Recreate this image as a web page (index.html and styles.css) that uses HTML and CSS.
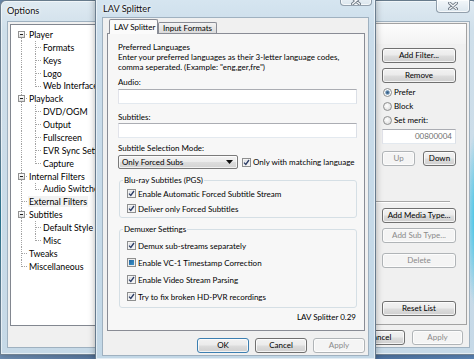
FILE: index.html
```html
<!DOCTYPE html>
<html lang="en">
<head>
    <meta charset="UTF-8">
    <meta name="viewport" content="width=device-width, initial-scale=1.0">
    <title>LAV Splitter</title>
    <link rel="stylesheet" href="styles.css">
</head>
<body>
    <div class="desktop">

        <!-- MPC options window (inactive, behind) -->
        <div class="window options-window">
            <div class="titlebar">
                <span class="title">Options</span>
                <span class="close-btn options-close">
                    <svg width="10" height="8" viewBox="0 0 10 8"><path d="M1.5 1 L8.5 7 M8.5 1 L1.5 7" stroke="#6f7a86" stroke-width="3" stroke-linecap="round"/><path d="M1.5 1 L8.5 7 M8.5 1 L1.5 7" stroke="#f6f8fa" stroke-width="1.3" stroke-linecap="round"/></svg>
                </span>
            </div>
            <div class="client options-client">
                <div class="options-main">
                    <div class="tree">
                        <div class="node top first"><span class="expander"></span>Player</div>
                        <div class="node child">Formats</div>
                        <div class="node child">Keys</div>
                        <div class="node child">Logo</div>
                        <div class="node child last-child">Web Interface</div>
                        <div class="node top"><span class="expander"></span>Playback</div>
                        <div class="node child">DVD/OGM</div>
                        <div class="node child">Output</div>
                        <div class="node child">Fullscreen</div>
                        <div class="node child">EVR Sync Settings</div>
                        <div class="node child last-child">Capture</div>
                        <div class="node top"><span class="expander"></span>Internal Filters</div>
                        <div class="node child last-child">Audio Switcher</div>
                        <div class="node top leaf"><span class="selected">External Filters</span></div>
                        <div class="node top"><span class="expander"></span>Subtitles</div>
                        <div class="node child">Default Style</div>
                        <div class="node child last-child">Misc</div>
                        <div class="node top leaf">Tweaks</div>
                        <div class="node top leaf last">Miscellaneous</div>
                    </div>
                    <div class="page">
                        <div class="page-caption"></div>
                        <div class="page-section upper">
                            <div class="page-list"></div>
                            <div class="side">
                                <button class="btn side-btn">Add Filter...</button>
                                <button class="btn side-btn gap">Remove</button>
                                <div class="radios">
                                    <div class="radio-row"><span class="radio checked"></span>Prefer</div>
                                    <div class="radio-row"><span class="radio"></span>Block</div>
                                    <div class="radio-row"><span class="radio"></span>Set merit:</div>
                                </div>
                                <div class="field merit">00800004</div>
                                <div class="updown">
                                    <button class="btn small" disabled>Up</button>
                                    <button class="btn small">Down</button>
                                </div>
                            </div>
                        </div>
                        <div class="page-rule"></div>
                        <div class="page-section lower">
                            <div class="page-list"></div>
                            <div class="side">
                                <button class="btn side-btn">Add Media Type...</button>
                                <button class="btn side-btn gap" disabled>Add Sub Type...</button>
                                <button class="btn side-btn gap-wide" disabled>Delete</button>
                                <button class="btn side-btn bottom">Reset List</button>
                            </div>
                        </div>
                    </div>
                </div>
                <div class="dialog-buttons options-buttons">
                    <button class="btn wide">OK</button>
                    <button class="btn wide">Cancel</button>
                    <button class="btn wide" disabled>Apply</button>
                </div>
            </div>
        </div>

        <!-- LAV Splitter property dialog (active, on top) -->
        <div class="window lav-window">
            <div class="titlebar">
                <span class="title">LAV Splitter</span>
                <span class="close-btn lav-close">
                    <svg width="10" height="8" viewBox="0 0 10 8"><path d="M1.5 1 L8.5 7 M8.5 1 L1.5 7" stroke="#6f7a86" stroke-width="3" stroke-linecap="round"/><path d="M1.5 1 L8.5 7 M8.5 1 L1.5 7" stroke="#f6f8fa" stroke-width="1.3" stroke-linecap="round"/></svg>
                </span>
            </div>
            <div class="client lav-client">
                <div class="tabs">
                    <div class="tab active">LAV Splitter</div>
                    <div class="tab">Input Formats</div>
                </div>
                <div class="tab-panel">
                    <p class="pref">Preferred Languages<br>Enter your preferred languages as their 3-letter language codes,<br>comma seperated. (Example: "eng,ger,fre")</p>
                    <div class="lbl">Audio:</div>
                    <div class="field text"></div>
                    <div class="lbl subs">Subtitles:</div>
                    <div class="field text tight"></div>
                    <div class="lbl">Subtitle Selection Mode:</div>
                    <div class="mode-row">
                        <div class="combo">
                            <span>Only Forced Subs</span>
                            <svg width="7" height="4" viewBox="0 0 7 4"><path d="M0 0 H7 L3.5 4 Z" fill="#111"/></svg>
                        </div>
                        <div class="check inline"><span class="box on"><svg width="7" height="7" viewBox="0 0 7 7"><path d="M1 3.6 L2.8 5.5 L6 1" fill="none" stroke="#2c3d66" stroke-width="1.3"/></svg></span>Only with matching language</div>
                    </div>
                    <fieldset class="group pgs">
                        <legend>Blu-ray Subtitles (PGS)</legend>
                        <div class="check"><span class="box on"><svg width="7" height="7" viewBox="0 0 7 7"><path d="M1 3.6 L2.8 5.5 L6 1" fill="none" stroke="#2c3d66" stroke-width="1.3"/></svg></span>Enable Automatic Forced Subtitle Stream</div>
                        <div class="check"><span class="box on"><svg width="7" height="7" viewBox="0 0 7 7"><path d="M1 3.6 L2.8 5.5 L6 1" fill="none" stroke="#2c3d66" stroke-width="1.3"/></svg></span>Deliver only Forced Subtitles</div>
                    </fieldset>
                    <fieldset class="group demux">
                        <legend>Demuxer Settings</legend>
                        <div class="check"><span class="box on"><svg width="7" height="7" viewBox="0 0 7 7"><path d="M1 3.6 L2.8 5.5 L6 1" fill="none" stroke="#2c3d66" stroke-width="1.3"/></svg></span>Demux sub-streams separately</div>
                        <div class="check"><span class="box mixed"></span>Enable VC-1 Timestamp Correction</div>
                        <div class="check"><span class="box on"><svg width="7" height="7" viewBox="0 0 7 7"><path d="M1 3.6 L2.8 5.5 L6 1" fill="none" stroke="#2c3d66" stroke-width="1.3"/></svg></span>Enable Video Stream Parsing</div>
                        <div class="check"><span class="box on"><svg width="7" height="7" viewBox="0 0 7 7"><path d="M1 3.6 L2.8 5.5 L6 1" fill="none" stroke="#2c3d66" stroke-width="1.3"/></svg></span>Try to fix broken HD-PVR recordings</div>
                    </fieldset>
                    <div class="version">LAV Splitter 0.29</div>
                </div>
                <div class="dialog-buttons lav-buttons">
                    <button class="btn wide default">OK</button>
                    <button class="btn wide">Cancel</button>
                    <button class="btn wide" disabled>Apply</button>
                </div>
            </div>
        </div>

    </div>
</body>
</html>
```

FILE: styles.css
```css
* {
    margin: 0;
    padding: 0;
    box-sizing: border-box;
}

body {
    width: 474px;
    height: 359px;
    overflow: hidden;
    font-family: Lato, 'Liberation Sans', sans-serif;
    font-size: 8px;
    color: #000;
}

.desktop {
    position: relative;
    width: 474px;
    height: 359px;
    overflow: hidden;
    background: linear-gradient(90deg, #6f8fb4, #3e5f8c 45%, #5b86b8);
}

/* Aero glass windows */
.window {
    position: absolute;
    display: flex;
    flex-direction: column;
    border: 1px solid rgba(40, 60, 80, 0.6);
    border-radius: 6px 6px 0 0;
    box-shadow: inset 0 0 0 1px rgba(255, 255, 255, 0.55), 0 0 7px rgba(0, 0, 0, 0.3);
}

.options-window {
    left: 0;
    top: 0;
    width: 478px;
    height: 355px;
    padding: 0 7px 6px 6px;
    background:
        radial-gradient(ellipse 12px 90px at 100% 62%, rgba(30, 190, 230, 0.95), rgba(30, 190, 230, 0)),
        linear-gradient(#dfeaf2, #cfdfea 30px, #c6d9e7);
}

.lav-window {
    left: 95px;
    top: -8px;
    width: 281px;
    height: 368px;
    padding: 0 6px 3px 6px;
    background: linear-gradient(#d8e7f1, #cadcea 40px, #c2d7e6);
}

.titlebar {
    display: flex;
    flex: none;
}

.options-window .titlebar {
    height: 20px;
}

.lav-window .titlebar {
    height: 24px;
    padding-left: 1px;
}

.title {
    font-size: 9.2px;
    color: #111;
    text-shadow: 0 0 5px #fff, 0 0 3px #fff;
}

.options-window .title {
    line-height: 20px;
}

.lav-window .title {
    margin-top: 11px;
    line-height: 10px;
}

.close-btn {
    margin-left: auto;
    display: flex;
    align-items: center;
    justify-content: center;
    border: 1px solid rgba(70, 90, 110, 0.55);
    border-top: none;
    border-radius: 0 0 4px 4px;
    background: linear-gradient(#f3f7fa, #dbe6ee);
    box-shadow: inset 0 0 0 1px rgba(255, 255, 255, 0.7);
}

.options-close {
    width: 34px;
    height: 13px;
    margin-top: -1px;
}

.lav-close {
    width: 32px;
    height: 13px;
    margin-right: -3px;
    padding-top: 4px;
}

.client {
    flex: 1;
    background: #f0f0f0;
    border: 1px solid #9fb1c0;
    display: flex;
    flex-direction: column;
}

/* ---- Options window ---- */
.options-client {
    padding: 1px 2px 0 2px;
}

.options-main {
    display: flex;
    gap: 5px;
    height: 304px;
    align-items: flex-start;
}

.tree {
    width: 175px;
    height: 302px;
    margin-top: 1px;
    background: #fff;
    border: 1px solid #828790;
    padding-top: 3px;
    font-size: 8.8px;
    --dot-v: repeating-linear-gradient(to bottom, #a3a3a3 0 1px, transparent 1px 2px);
    --dot-h: repeating-linear-gradient(to right, #a3a3a3 0 1px, transparent 1px 2px);
}

.node {
    display: flex;
    align-items: center;
    height: 12.88px;
    white-space: nowrap;
}

.node.top {
    background:
        var(--dot-h) 11px 6px / 6px 1px no-repeat,
        var(--dot-v) 10px 0 / 1px 100% no-repeat;
}

.node.top.first {
    background-position: 11px 6px, 10px 6px;
}

.node.top.last {
    background-size: 6px 1px, 1px 7px;
}

.node.leaf {
    padding-left: 18px;
}

.node.child {
    padding-left: 32px;
    background:
        var(--dot-h) 25px 6px / 6px 1px no-repeat,
        var(--dot-v) 24px 0 / 1px 100% no-repeat,
        var(--dot-v) 10px 0 / 1px 100% no-repeat;
}

.node.child.last-child {
    background-size: 6px 1px, 1px 7px, 1px 100%;
}

.expander {
    width: 7px;
    height: 7px;
    margin: 0 4px 0 7px;
    border: 1px solid #919191;
    background:
        linear-gradient(#1e1e1e, #1e1e1e) center / 3px 1px no-repeat,
        linear-gradient(#ffffff, #dedede);
}

.selected {
    background: #f2f2f2;
    padding: 0 1px;
    margin-left: -1px;
}

.page {
    flex: 1;
    height: 302px;
    border: 1px solid #a2a2a2;
    box-shadow: inset 1px 1px 0 #fff;
    display: flex;
    flex-direction: column;
}

.page-caption {
    height: 20px;
    flex: none;
    background: linear-gradient(#fdfdfd, #f3f3f3);
}

.page-section {
    display: flex;
}

.page-section.upper {
    height: 157px;
    padding-top: 4px;
    flex: none;
}

.page-section.lower {
    flex: 1;
    padding: 5px 0 8px;
}

.page-list {
    flex: 1;
}

.side {
    width: 74px;
    margin-right: 10px;
    display: flex;
    flex-direction: column;
}

.page-rule {
    height: 2px;
    margin-right: 16px;
    border-top: 1px solid #a8a8a8;
    border-bottom: 1px solid #fff;
    flex: none;
}

.btn {
    font-family: inherit;
    font-size: 8px;
    color: #000;
    height: 15px;
    border: 1px solid #707070;
    border-radius: 3px;
    background: linear-gradient(#f2f2f2 0%, #ebebeb 48%, #dddddd 52%, #cfcfcf 100%);
    box-shadow: inset 0 0 0 1px rgba(255, 255, 255, 0.75);
    line-height: 13px;
    padding: 0;
}

.btn:disabled {
    color: #8a8a8a;
    border-color: #b0b4b7;
    background: #f4f4f4;
}

.btn.default {
    border-color: #3c7fb1;
}

.side-btn {
    width: 74px;
}

.side-btn.gap {
    margin-top: 5px;
}

.side-btn.gap-wide {
    margin-top: 10px;
}

.side-btn.bottom {
    margin-top: auto;
}

.radios {
    margin-top: 2px;
}

.radio-row {
    display: flex;
    align-items: center;
    height: 14px;
    padding-left: 1px;
}

.radio {
    width: 9px;
    height: 9px;
    margin-right: 2px;
    border: 1px solid #8e8f8f;
    border-radius: 50%;
    background: radial-gradient(circle at 40% 40%, #ffffff, #d4d4d4);
}

.radio.checked {
    background: radial-gradient(circle, #34587c 0, #5d86ad 1.6px, #e8eef3 2.6px, #ffffff 3px, #d2d2d2 100%);
}

.field {
    background: #fff;
    border: 1px solid #abadb3;
    border-color: #abadb3 #dbdfe6 #e3e9ef #e2e3ea;
    height: 15px;
}

.field.merit {
    margin-top: 2px;
    text-align: right;
    color: #6e6e6e;
    line-height: 13px;
    padding-right: 3px;
}

.updown {
    display: flex;
    justify-content: space-between;
    margin-top: 7px;
}

.btn.small {
    width: 33px;
}

.dialog-buttons {
    display: flex;
    justify-content: flex-end;
}

.options-buttons {
    gap: 7px;
    margin-top: 3px;
    margin-right: 4px;
}

.btn.wide {
    width: 51px;
}

/* ---- LAV Splitter dialog ---- */
.lav-client {
    padding: 1px 3px 0 4px;
}

.tabs {
    display: flex;
    height: 15px;
    padding-left: 2px;
    margin-bottom: -1px;
    position: relative;
    z-index: 1;
}

.tab {
    height: 11px;
    margin-top: 3px;
    padding: 0 4px;
    line-height: 10px;
    border: 1px solid #898c95;
    border-bottom: none;
    border-radius: 2px 2px 0 0;
    background: linear-gradient(#f3f3f3, #e6e6e6 50%, #dadada);
    white-space: nowrap;
}

.tab.active {
    height: 15px;
    margin-top: 0;
    width: 49px;
    line-height: 14px;
    background: #fbfbfb;
}

.tab-panel {
    height: 298px;
    border: 1px solid #898c95;
    background: #f7f7f7;
    padding: 8px 7px 0 10px;
}

.pref {
    line-height: 10px;
    white-space: nowrap;
}

.lbl {
    margin-top: 5px;
    line-height: 10px;
}

.lbl.subs {
    margin-top: 8px;
}

.field.text {
    margin-top: 2px;
}

.field.text.tight {
    margin-top: 1px;
}

.mode-row {
    display: flex;
    align-items: center;
    margin-top: 2px;
    height: 14px;
}

.combo {
    width: 120px;
    height: 14px;
    display: flex;
    align-items: center;
    justify-content: space-between;
    padding: 0 4px 0 3px;
    border: 1px solid #7a7a7a;
    border-radius: 2px;
    background: linear-gradient(#f3f3f3, #ebebeb 48%, #dddddd 52%, #d2d2d2);
    box-shadow: inset 0 0 0 1px rgba(255, 255, 255, 0.7);
}

.check {
    display: flex;
    align-items: center;
    height: 15px;
    margin-left: 4px;
    white-space: nowrap;
}

.check.inline {
    margin-left: 4px;
}

.box {
    width: 9px;
    height: 9px;
    margin-right: 2px;
    flex: none;
    display: flex;
    align-items: center;
    justify-content: center;
    border: 1px solid #8e8f8f;
    background: linear-gradient(135deg, #d9dce0, #f8f8f8);
    box-shadow: inset 0 0 0 1px #f4f4f4;
}

.box.mixed {
    background: linear-gradient(135deg, #1d5c97, #3f9bd1);
    box-shadow: inset 0 0 0 1px #ececec;
}

.group {
    margin-left: 1px;
    border: 1px solid #d5dfe5;
    border-radius: 3px;
    padding: 1px 0 1px 3px;
}

.group legend {
    line-height: 10px;
    padding: 0 1px;
}

.group.pgs {
    margin-top: 6px;
}

.group.demux {
    margin-top: 6px;
    padding: 3px 0 2px 3px;
}

.group.demux .check {
    height: 17px;
}

.version {
    margin-top: 4px;
    text-align: right;
    line-height: 10px;
    padding-right: 1px;
}

.lav-buttons {
    gap: 6px;
    margin-top: 7px;
}

.lav-buttons .btn.wide {
    width: 52px;
}
```
